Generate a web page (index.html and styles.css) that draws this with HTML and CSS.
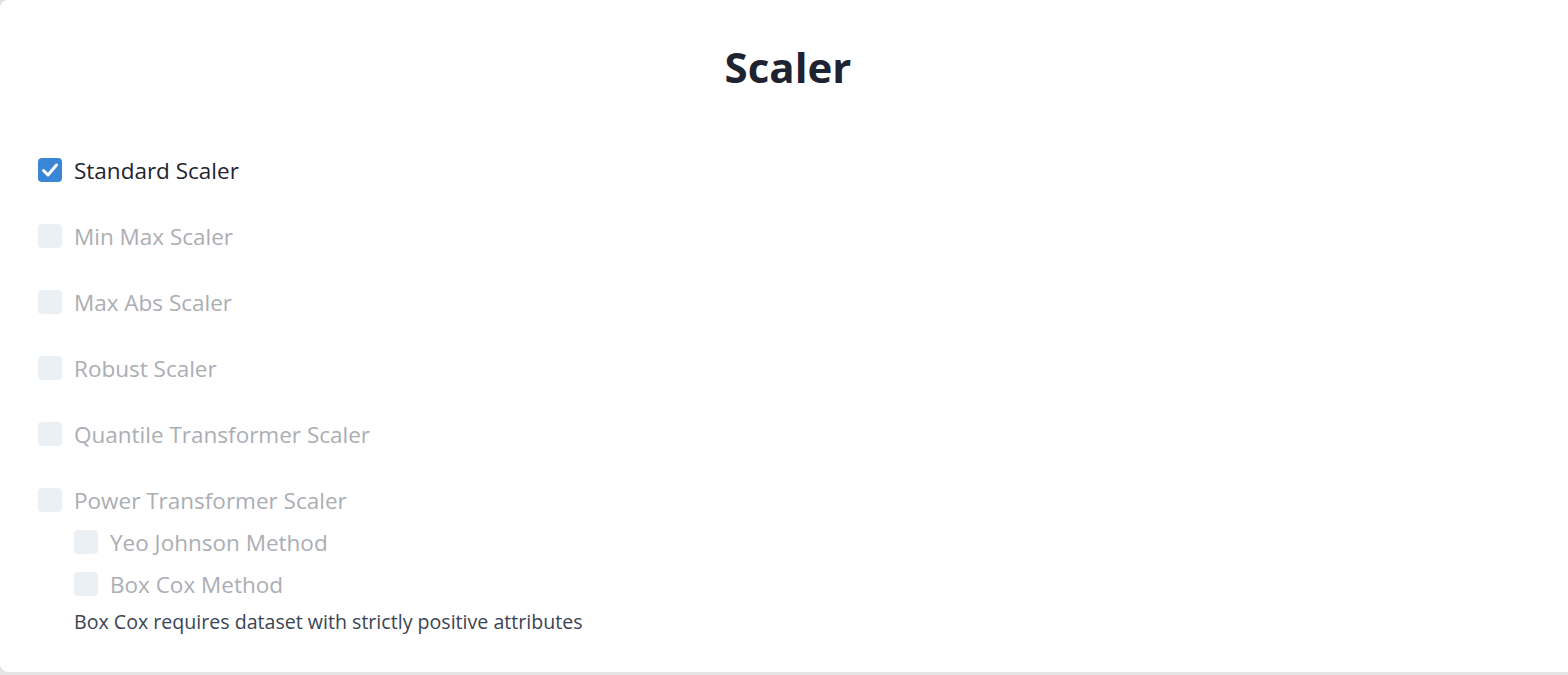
FILE: index.html
```html
<!DOCTYPE html>
<html lang="en">
<head>
    <meta charset="UTF-8">
    <meta name="viewport" content="width=device-width, initial-scale=1.0">
    <title>Scaler</title>
    <link rel="stylesheet" href="styles.css">
</head>
<body>

    <div class="card">
        <h1>Scaler</h1>

        <div class="options">
            <label class="option">
                <span class="box checked">
                    <svg viewBox="0 0 24 24" width="24" height="24"><polyline points="5.5,12.5 10,17 18.5,7" fill="none" stroke="#fff" stroke-width="3" stroke-linecap="round" stroke-linejoin="round"/></svg>
                </span>
                <span class="label">Standard Scaler</span>
            </label>
            <label class="option disabled">
                <span class="box"></span>
                <span class="label">Min Max Scaler</span>
            </label>
            <label class="option disabled">
                <span class="box"></span>
                <span class="label">Max Abs Scaler</span>
            </label>
            <label class="option disabled">
                <span class="box"></span>
                <span class="label">Robust Scaler</span>
            </label>
            <label class="option disabled">
                <span class="box"></span>
                <span class="label">Quantile Transformer Scaler</span>
            </label>

            <div class="group">
                <label class="option disabled">
                    <span class="box"></span>
                    <span class="label">Power Transformer Scaler</span>
                </label>
                <div class="sub">
                    <label class="option disabled">
                        <span class="box"></span>
                        <span class="label">Yeo Johnson Method</span>
                    </label>
                    <label class="option disabled">
                        <span class="box"></span>
                        <span class="label">Box Cox Method</span>
                    </label>
                    <p class="note">Box Cox requires dataset with strictly positive attributes</p>
                </div>
            </div>
        </div>
    </div>

</body>
</html>
```

FILE: styles.css
```css
body {
    margin: 0;
    background-color: #e4e4e4;
    font-family: "Segoe UI", "Open Sans", "Noto Sans", sans-serif;
    color: #1f2430;
}

.card {
    background: #fff;
    border-radius: 8px 0 0 8px;
    height: 672px;
    box-sizing: border-box;
    padding: 43px 38px 0;
    box-shadow: 0 0 3px rgba(0, 0, 0, 0.08);
}

h1 {
    margin: 0;
    padding-left: 8px;
    text-align: center;
    font-size: 42px;
    line-height: 48px;
    font-weight: 700;
    color: #1d2330;
}

.options {
    display: flex;
    flex-direction: column;
    gap: 24px;
    margin-top: 58px;
}

.option {
    display: flex;
    align-items: center;
    gap: 12px;
    height: 42px;
}

.box {
    width: 24px;
    height: 24px;
    border-radius: 4px;
    background-color: #ebf0f5;
    flex-shrink: 0;
    display: flex;
}

.box.checked {
    background-color: #3a86d6;
}

.label {
    font-size: 22.5px;
    color: #1f2430;
}

.disabled .label {
    color: #abaeb3;
}

.sub {
    padding-left: 36px;
}

.note {
    margin: 4px 0 0;
    font-size: 19.6px;
    line-height: 26px;
    color: #3b4454;
}
```
